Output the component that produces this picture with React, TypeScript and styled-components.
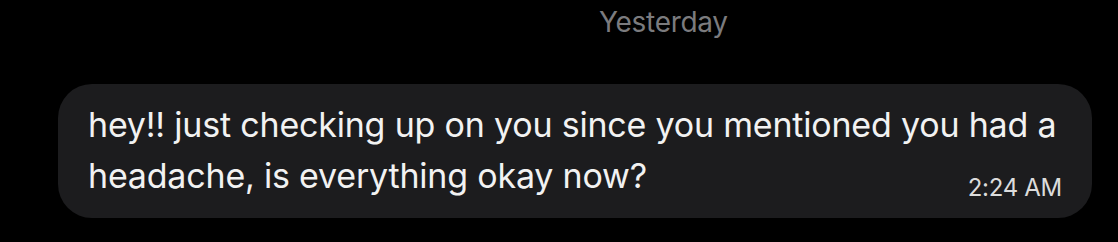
import React from "react";
import styled, { createGlobalStyle } from "styled-components";

const Global = createGlobalStyle`
  html, body { margin: 0; padding: 0; background: #000; }
  body { font-family: Inter, "Noto Sans", sans-serif; -webkit-font-smoothing: antialiased; }
`;

const Page = styled.div`
  width: 1118px;
  height: 242px;
  background: #000;
  display: flex;
  flex-direction: column;
  box-sizing: border-box;
  padding: 4px 26px 0 58px;
`;

const DayLabel = styled.div`
  align-self: flex-start;
  margin-left: 541px;
  font-size: 28px;
  line-height: 36px;
  color: #7b7b7e;
  letter-spacing: -0.3px;
`;

const Bubble = styled.div`
  margin-top: 44px;
  background: #1c1c1e;
  border-radius: 34px;
  padding: 15px 30px 14px 30px;
  box-sizing: border-box;
  height: 134px;
  position: relative;
`;

const Message = styled.p`
  margin: 0;
  font-size: 34px;
  line-height: 51px;
  color: #f2f2f2;
  letter-spacing: -0.2px;
`;

const Time = styled.span`
  position: absolute;
  right: 30px;
  bottom: 16px;
  font-size: 24px;
  color: #dcdcdc;
  letter-spacing: -0.3px;
`;

export default function App() {
  return (
    <>
      <Global />
      <Page>
        <DayLabel>Yesterday</DayLabel>
        <Bubble>
          <Message>
            hey!! just checking up on you since you mentioned you had a
            <br />
            headache, is everything okay now?
          </Message>
          <Time>2:24 AM</Time>
        </Bubble>
      </Page>
    </>
  );
}
